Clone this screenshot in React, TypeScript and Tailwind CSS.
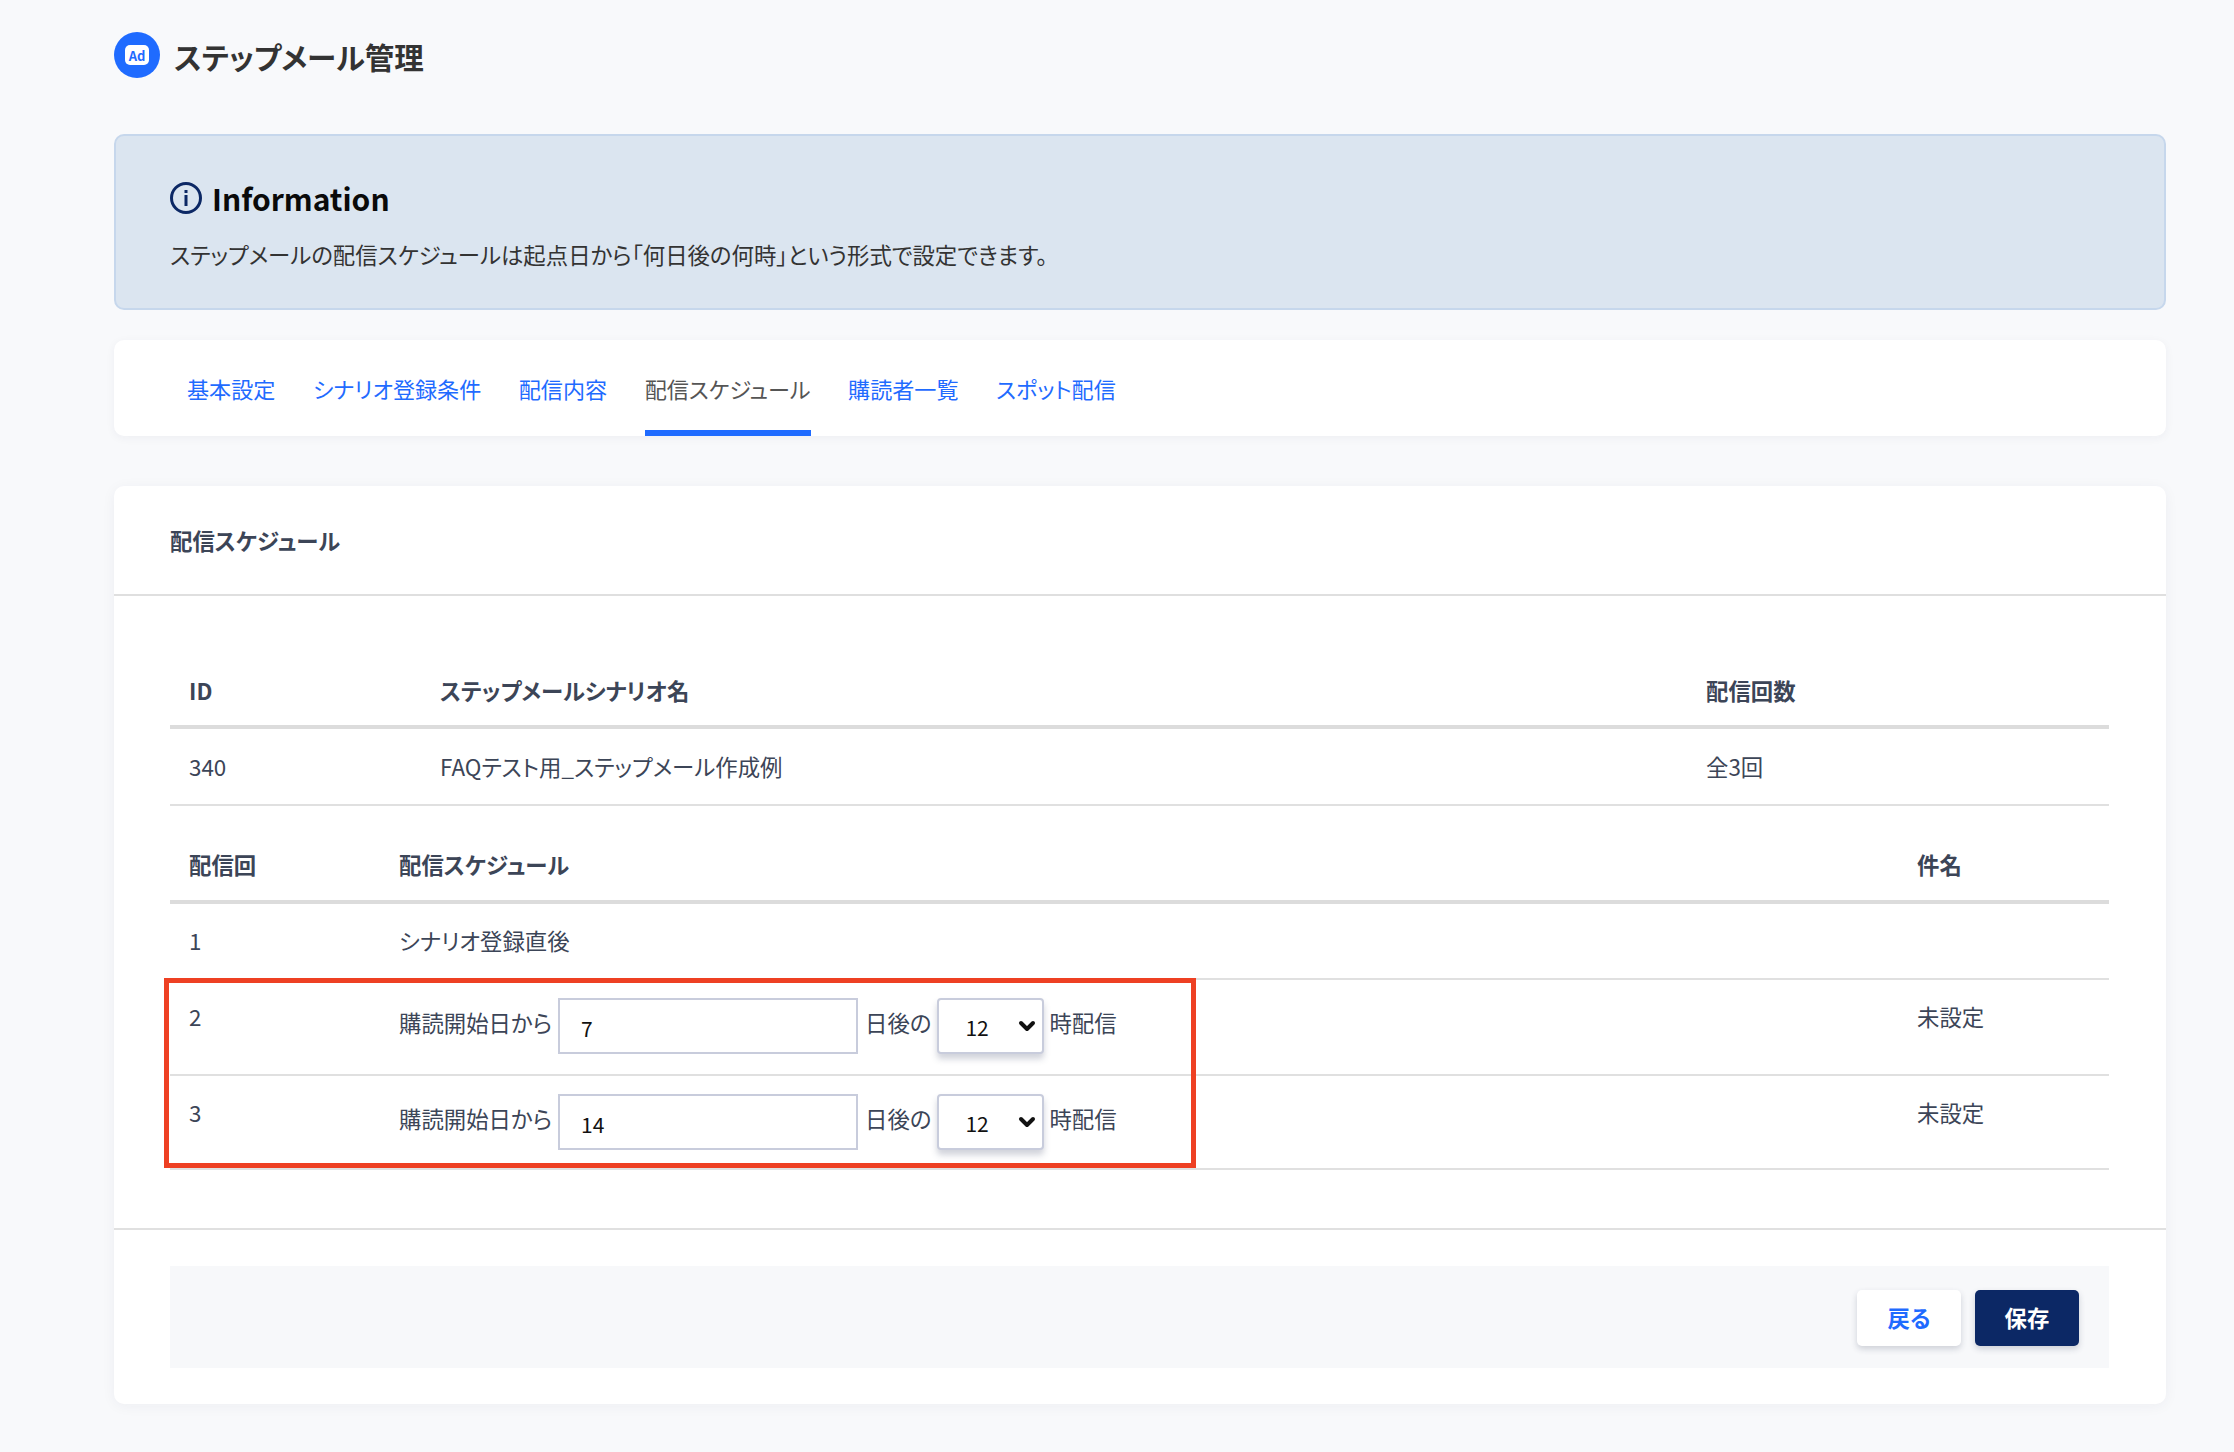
import { ChevronDown } from 'lucide-react'

const tabs = ['基本設定', 'シナリオ登録条件', '配信内容', '配信スケジュール', '購読者一覧', 'スポット配信']

function ScheduleRow({ no, days, tall }: { no: string; days: string; tall?: boolean }) {
  return (
    <div className={`flex border-b-2 border-[#e0e0e0] ${tall ? 'h-[96px]' : 'h-[94px]'}`}>
      <div className="w-[229px] pl-[19px] pt-[20px]">{no}</div>
      <div className="flex flex-1 items-start pt-[18px]">
        <span className="mt-[8px]">購読開始日から</span>
        <input
          readOnly
          value={days}
          className="ml-[6px] h-[56px] w-[300px] border-2 border-[#c8ccdc] bg-white pl-[21px] pt-[3px] text-[21px] text-[#111] outline-none"
        />
        <span className="ml-[7px] mt-[8px]">日後の</span>
        <div className="relative ml-[6px] flex h-[56px] w-[107px] items-center rounded-[4px] border-2 border-[#c8ccdc] bg-white pl-[26px] pt-[3px] text-[21px] text-[#111] shadow-[0_5px_6px_rgba(70,80,110,0.25)]">
          12
          <ChevronDown className="absolute right-[3px] top-[14px] h-[24px] w-[24px] text-[#111]" strokeWidth={4} />
        </div>
        <span className="ml-[5px] mt-[8px]">時配信</span>
      </div>
      <div className="w-[192px] pt-[20px]">未設定</div>
    </div>
  )
}

export default function App() {
  return (
    <div className="min-h-[1452px] bg-[#f8f9fb] pl-[114px] pr-[68px] pt-[32px] font-['Noto_Sans_CJK_JP',sans-serif] text-[22.4px] text-[#3c4557] [font-feature-settings:'palt']">
      <header className="flex h-[46px] items-center">
        <div className="flex h-[46px] w-[46px] items-center justify-center rounded-full bg-[#1f6bff]">
          <span className="flex h-[20px] w-[24px] items-center justify-center rounded-[5px] bg-white text-[13px] leading-none font-bold text-[#1f6bff]">Ad</span>
        </div>
        <h1 className="ml-[14px] mt-[3px] text-[29.5px] font-bold text-[#333]">ステップメール管理</h1>
      </header>

      <section className="mt-[56px] h-[176px] rounded-[10px] border-2 border-[#c6d7ec] bg-[#dbe5f0] pl-[54px] pt-[42px]">
        <div className="flex items-center">
          <svg viewBox="0 0 32 32" className="h-[32px] w-[32px]" fill="none">
            <circle cx="16" cy="16" r="14.5" stroke="#0c2865" strokeWidth="3" />
            <rect x="14.5" y="13" width="3" height="11" fill="#0c2865" />
            <rect x="14.5" y="8" width="3" height="3" fill="#0c2865" />
          </svg>
          <h2 className="ml-[10px] text-[30px] leading-[40px] font-bold text-[#0a0a0a]">Information</h2>
        </div>
        <p className="mt-[21px] leading-[30px] text-[#333]">
          ステップメールの配信スケジュールは起点日から「何日後の何時」という形式で設定できます。
        </p>
      </section>

      <nav className="mt-[30px] flex h-[96px] gap-[37.5px] rounded-[10px] bg-white pl-[73px] text-[22.1px] shadow-[0_2px_10px_rgba(30,40,70,0.05)]">
        {tabs.map((t) => (
          <a
            key={t}
            className={`flex h-[96px] items-start pt-[32px] ${
              t === '配信スケジュール' ? 'border-b-[6px] border-[#1f6bff] text-[#555]' : 'text-[#1f6bff]'
            }`}
          >
            {t}
          </a>
        ))}
      </nav>

      <main className="relative mt-[50px] h-[918px] rounded-[10px] bg-white shadow-[0_2px_14px_rgba(30,40,70,0.05)]">
        <div className="flex h-[110px] items-center border-b-2 border-[#dfdfdf] pt-[2px] pl-[56px] font-bold">配信スケジュール</div>

        <div className="pl-[56px] pr-[57px] pt-[72px]">
          <div className="flex h-[61px] items-start border-b-4 border-[#dcdcdc] font-bold">
            <div className="w-[270px] pl-[19px] pt-[6px]">ID</div>
            <div className="flex-1 pt-[6px]">ステップメールシナリオ名</div>
            <div className="w-[403px] pt-[6px]">配信回数</div>
          </div>
          <div className="flex h-[77px] items-center border-b-2 border-[#e0e0e0]">
            <div className="w-[270px] pl-[19px]">340</div>
            <div className="flex-1">FAQテスト用_ステップメール作成例</div>
            <div className="w-[403px]">全3回</div>
          </div>

          <div className="mt-[38px] flex h-[60px] items-start border-b-4 border-[#dcdcdc] font-bold">
            <div className="w-[229px] pl-[19px] pt-[4px]">配信回</div>
            <div className="flex-1 pt-[4px]">配信スケジュール</div>
            <div className="w-[192px] pt-[4px]">件名</div>
          </div>
          <div className="flex h-[76px] items-center border-b-2 border-[#e0e0e0]">
            <div className="w-[229px] pl-[19px]">1</div>
            <div className="flex-1">シナリオ登録直後</div>
          </div>
          <ScheduleRow no="2" days="7" tall />
          <ScheduleRow no="3" days="14" />
        </div>

        <div className="mt-[58px] border-t-2 border-[#e0e0e0] pl-[56px] pr-[57px] pt-[36px]">
          <div className="flex h-[102px] items-start justify-end gap-[14px] bg-[#f7f8fa] pr-[30px] pt-[24px]">
            <button className="h-[56px] w-[104px] rounded-[5px] bg-white font-bold text-[#1f6bff] shadow-[0_3px_6px_rgba(40,50,80,0.2)]">戻る</button>
            <button className="h-[56px] w-[104px] rounded-[5px] bg-[#0c2865] font-bold text-white shadow-[0_3px_6px_rgba(40,50,80,0.2)]">保存</button>
          </div>
        </div>

        <div className="pointer-events-none absolute left-[50px] top-[492px] h-[190px] w-[1032px] border-[5px] border-[#ee4023]" />
      </main>
    </div>
  )
}
